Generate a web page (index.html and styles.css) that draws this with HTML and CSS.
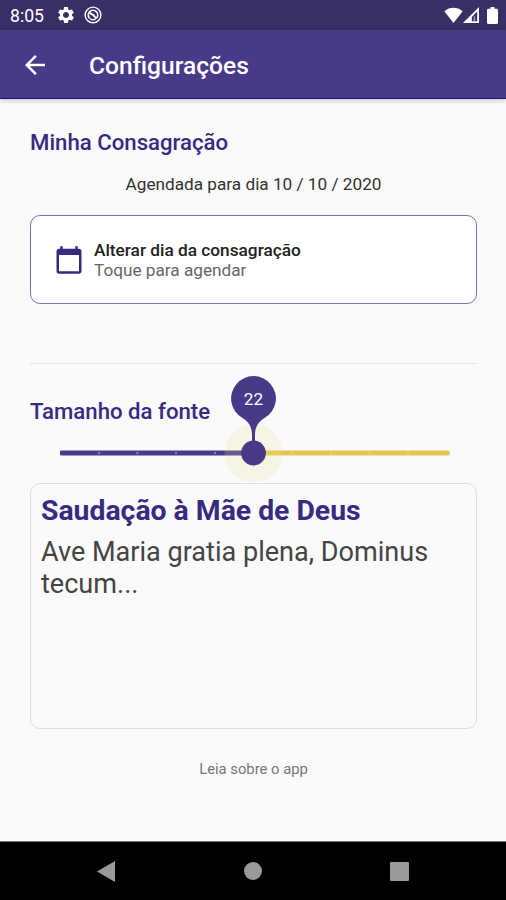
FILE: index.html
```html
<!DOCTYPE html>
<html lang="pt-BR">
<head>
<meta charset="UTF-8">
<meta name="viewport" content="width=device-width, initial-scale=1">
<title>Configurações</title>
<link rel="stylesheet" href="styles.css">
</head>
<body>
<div class="status-bar">
  <span class="clock">8:05</span>
  <svg class="gear" width="20" height="20" viewBox="0 0 24 24"><path fill="#fff" d="M19.14 12.94c.04-.3.06-.61.06-.94 0-.32-.02-.64-.07-.94l2.03-1.58c.18-.14.23-.41.12-.61l-1.92-3.32c-.12-.22-.37-.29-.59-.22l-2.39.96c-.5-.38-1.03-.7-1.62-.94l-.36-2.54c-.04-.24-.24-.41-.48-.41h-3.84c-.24 0-.43.17-.47.41l-.36 2.54c-.59.24-1.13.57-1.62.94l-2.39-.96c-.22-.08-.47 0-.59.22L2.74 8.87c-.12.21-.08.47.12.61l2.03 1.58c-.05.3-.09.63-.09.94s.02.64.07.94l-2.03 1.58c-.18.14-.23.41-.12.61l1.92 3.32c.12.22.37.29.59.22l2.39-.96c.5.38 1.03.7 1.62.94l.36 2.54c.05.24.24.41.48.41h3.84c.24 0 .44-.17.47-.41l.36-2.54c.59-.24 1.13-.56 1.62-.94l2.39.96c.22.08.47 0 .59-.22l1.92-3.32c.12-.22.07-.47-.12-.61l-2.01-1.58zM12 15.6c-1.98 0-3.6-1.62-3.6-3.6s1.62-3.6 3.6-3.6 3.6 1.62 3.6 3.6-1.62 3.6-3.6 3.6z"/></svg>
  <svg class="privacy" width="18" height="18" viewBox="0 0 18 18" fill="none" stroke="#fff">
    <circle cx="9" cy="9" r="7.9" stroke-width="1.4"/>
    <path d="M5.4 12A4.700 4.700 0 1 1 12.600 12" stroke-width="1.7"/>
    <path d="M5.500 12.200a4.700 4.700 0 0 0 6.200.6" stroke-width="1.2"/>
    <path d="M5.300 6.800l4 2.200 3.200 3.600" stroke-width="2"/>
  </svg>
  <div class="status-right">
    <svg width="19" height="17" viewBox="0 0 19 17"><path fill="#fff" d="M.3 4.200C5.800-.4 13.200-.4 18.700 4.200L9.500 16z"/></svg>
    <svg width="17" height="17" viewBox="0 0 17 17">
      <path fill="#fff" fill-rule="evenodd" d="M16 0v16H0zM14.200 4.600L8.800 10V14.200h5.400z"/>
      <path fill="#fff" fill-opacity=".45" d="M10.500 10l1.800-1.800v6h-1.800z"/>
    </svg>
    <svg class="battery" width="11" height="17" viewBox="0 0 11 17"><path fill="#fff" d="M3.500 0h4v1.800h2A1.400 1.400 0 0 1 11 3.200V15.500A1.500 1.500 0 0 1 9.500 17h-8A1.500 1.500 0 0 1 0 15.500V3.200A1.400 1.400 0 0 1 1.500 1.800h2z"/></svg>
  </div>
</div>

<div class="app-bar">
  <svg width="30" height="30" viewBox="0 0 24 24"><path fill="#fff" d="M20 11H7.830l5.590-5.590L12 4l-8 8 8 8 1.410-1.410L7.830 13H20v-2z"/></svg>
  <h1>Configurações</h1>
</div>

<div class="content">
  <h2>Minha Consagração</h2>
  <p class="scheduled">Agendada para dia 10 / 10 / 2020</p>

  <div class="date-card">
    <svg width="30" height="30" viewBox="0 0 24 24"><path fill="#372a80" d="M20 3h-1V1h-2v2H7V1H5v2H4c-1.100 0-2 .9-2 2v16c0 1.100.9 2 2 2h16c1.100 0 2-.9 2-2V5c0-1.100-.9-2-2-2zm0 18H4V8h16v13z"/></svg>
    <div>
      <div class="card-title">Alterar dia da consagração</div>
      <div class="card-subtitle">Toque para agendar</div>
    </div>
  </div>

  <div class="divider"></div>

  <h2 class="font-size-title">Tamanho da fonte</h2>

  <!-- Font size slider with its value balloon -->
  <svg class="slider" width="447" height="60" viewBox="0 0 447 60">
    <rect x="30" y="27.5" width="194" height="5" rx="1" fill="#483a89"/>
    <path d="M223 27.500h194.500a2.500 2.500 0 0 1 0 5H223z" fill="#e3c651"/>
    <g fill="#8d84b5">
      <circle cx="69" cy="30" r="1.2"/>
      <circle cx="107.5" cy="30" r="1.2"/>
      <circle cx="146" cy="30" r="1.2"/>
      <circle cx="185" cy="30" r="1.2"/>
    </g>
    <g fill="#ead26e">
      <circle cx="262" cy="30" r="1.2"/>
      <circle cx="301" cy="30" r="1.2"/>
      <circle cx="340" cy="30" r="1.2"/>
      <circle cx="378" cy="30" r="1.2"/>
    </g>
    <circle cx="223.5" cy="30" r="29" fill="#e6e28c" fill-opacity=".2"/>
    <circle cx="223.5" cy="30" r="12.4" fill="#483a89"/>
    <path fill="#483a89" d="M222 20V12C222 4 219-1 212.500-5A22.400 22.400 0 1 1 234.500-5C228-1 225 4 225 12v8z"/>
    <text class="slider-value" x="223.5" y="-18.5" text-anchor="middle">22</text>
  </svg>

  <div class="preview">
    <h3>Saudação à Mãe de Deus</h3>
    <p>Ave Maria gratia plena, Dominus tecum...</p>
  </div>

  <div class="about">Leia sobre o app</div>
</div>

<div class="nav-bar">
  <svg width="18" height="21" viewBox="0 0 18 21"><path fill="#999" d="M18 0v21L0 10.500z"/></svg>
  <svg width="18" height="18" viewBox="0 0 18 18"><circle cx="9" cy="9" r="9" fill="#999"/></svg>
  <svg width="19" height="19" viewBox="0 0 19 19"><rect width="19" height="19" rx="1" fill="#999"/></svg>
</div>
</body>
</html>
```

FILE: styles.css
```css
* {
  box-sizing: border-box;
}
body {
  margin: 0;
  height: 900px;
  display: flex;
  flex-direction: column;
  background-color: #fafafa;
  font-family: Roboto, sans-serif;
  overflow: hidden;
}
h1, h2, h3, p {
  margin: 0;
}
svg {
  display: block;
  flex: none;
}
.status-bar {
  height: 30px;
  display: flex;
  align-items: center;
  padding: 0 8px 0 10px;
  background-color: #372f66;
}
.clock {
  width: 46px;
  color: #fff;
  font-size: 17.6px;
  line-height: 32px;
  padding-top: 2px;
}
.privacy {
  margin-left: 8px;
}
.status-right {
  display: flex;
  margin-left: auto;
}
.status-right .battery {
  margin-left: 7px;
}
.app-bar {
  height: 69px;
  display: flex;
  align-items: center;
  padding: 1px 0 0 20px;
  background-color: #483a89;
  border-bottom: 1px solid #29186f;
  box-shadow: 0 1px 5px rgba(0, 0, 0, .25);
  z-index: 1;
}
.app-bar h1 {
  margin-left: 39px;
  padding-top: 1px;
  color: #fff;
  font-size: 24.6px;
  font-weight: 500;
}
.content {
  flex: 1;
  padding: 29px 29px 0 30px;
}
h2 {
  color: #372a80;
  font-size: 22.2px;
  line-height: 28px;
  font-weight: 500;
}
.scheduled {
  margin-top: 18px;
  text-align: center;
  color: #333;
  font-size: 17.2px;
  line-height: 20px;
}
.date-card {
  height: 89px;
  margin-top: 21px;
  padding-left: 23px;
  display: flex;
  align-items: center;
  gap: 10px;
  background-color: #fff;
  border: 1px solid #7b72aa;
  border-radius: 10px;
}
.card-title {
  color: #222;
  font-size: 17.25px;
  line-height: 20px;
  font-weight: 500;
}
.card-subtitle {
  color: #666;
  font-size: 17.2px;
  line-height: 20px;
}
.divider {
  height: 1px;
  margin-top: 59px;
  background-color: #e4e4e4;
}
.font-size-title {
  margin-top: 33px;
}
.slider {
  margin-top: -2px;
  overflow: visible;
}
.slider-value {
  fill: #fff;
  font-size: 17.2px;
}
.preview {
  height: 246px;
  padding: 9px 10px;
  border: 1px solid #dedede;
  border-radius: 10px;
}
.preview h3 {
  color: #372a80;
  font-size: 28.35px;
  line-height: 36px;
  font-weight: 700;
}
.preview p {
  margin-top: 7px;
  color: #444;
  font-size: 27.07px;
  line-height: 32px;
}
.about {
  margin-top: 31px;
  text-align: center;
  color: #777;
  font-size: 14.8px;
  line-height: 18px;
}
.nav-bar {
  height: 59px;
  display: flex;
  align-items: center;
  justify-content: space-between;
  padding: 0 97px;
  background-color: #000;
  border-top: 1px solid #777;
}
```
